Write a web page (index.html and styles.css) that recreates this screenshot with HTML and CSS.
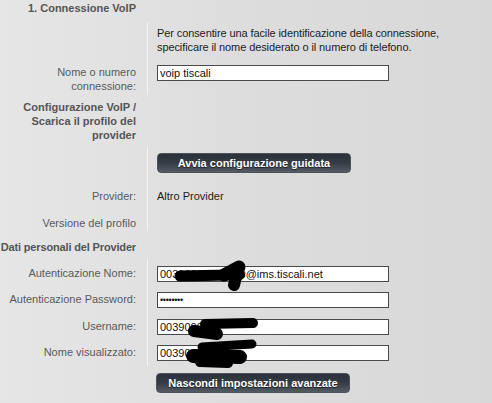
FILE: index.html
```html
<!DOCTYPE html>
<html lang="it">
<head>
<meta charset="utf-8">
<title>Connessione VoIP</title>
<link rel="stylesheet" href="styles.css">
</head>
<body>
<div class="page">
  <div class="row head h1">
    <div class="label bold">1. Connessione VoIP</div>
    <div class="value"></div>
  </div>

  <div class="section s1">
    <div class="row desc">
      <div class="label"></div>
      <div class="value">Per consentire una facile identificazione della connessione,<br>specificare il nome desiderato o il numero di telefono.</div>
    </div>
    <div class="row field name-row">
      <div class="label">Nome o numero<br>connessione:</div>
      <div class="value"><input class="text" type="text" value="voip tiscali"></div>
    </div>
  </div>

  <div class="row head h2">
    <div class="label bold">Configurazione VoIP /<br>Scarica il profilo del<br>provider</div>
    <div class="value"></div>
  </div>

  <div class="section s2">
    <div class="row btn-row">
      <div class="label"></div>
      <div class="value"><button class="btn" type="button">Avvia configurazione guidata</button></div>
    </div>
    <div class="row provider">
      <div class="label">Provider:</div>
      <div class="value dark">Altro Provider</div>
    </div>
    <div class="row version">
      <div class="label">Versione del profilo</div>
      <div class="value"></div>
    </div>
  </div>

  <div class="row head h3">
    <div class="label bold tight">Dati personali del Provider</div>
    <div class="value"></div>
  </div>

  <div class="section s3">
    <div class="row field cred">
      <div class="label">Autenticazione Nome:</div>
      <div class="value"><input class="text" type="text" value="00390000000000@ims.tiscali.net"></div>
    </div>
    <div class="row field cred">
      <div class="label">Autenticazione Password:</div>
      <div class="value"><input class="text pw" type="password" value="12345678"></div>
    </div>
    <div class="row field cred">
      <div class="label">Username:</div>
      <div class="value"><input class="text" type="text" value="0039000000"></div>
    </div>
    <div class="row field cred">
      <div class="label">Nome visualizzato:</div>
      <div class="value"><input class="text" type="text" value="0039000000"></div>
    </div>
  </div>

  <div class="row last">
    <div class="label"></div>
    <div class="value"><button class="btn" type="button">Nascondi impostazioni avanzate</button></div>
  </div>

  <svg class="redact" width="492" height="403" viewBox="0 0 492 403" aria-hidden="true">
    <g stroke="#000" stroke-linecap="round" stroke-linejoin="round" fill="none">
      <path d="M180 276 L230 275" stroke-width="11"/>
      <path d="M224 275 L239 267" stroke-width="13"/>
      <path d="M238 269 L234 285" stroke-width="12"/>
      <path d="M232 276 L240 275" stroke-width="10"/>
      <path d="M205 324 L253 323" stroke-width="10"/>
      <path d="M194 331 L217 334" stroke-width="12"/>
      <path d="M202 347 L252 344" stroke-width="9"/>
      <path d="M193 356 L240 357" stroke-width="14"/>
      <path d="M200 362 L228 363" stroke-width="10"/>
    </g>
  </svg>
</div>
</body>
</html>
```

FILE: styles.css
```css
* { box-sizing: border-box; }

html, body {
  margin: 0;
  padding: 0;
}

body {
  width: 492px;
  height: 403px;
  overflow: hidden;
  background: linear-gradient(to right, #e6e6e6 0%, #dddddd 50%, #d8d8d8 100%);
  font-family: "Liberation Sans", Arial, sans-serif;
  font-size: 11px;
  line-height: 14px;
  color: #555;
}

.page {
  position: relative;
  width: 492px;
  height: 403px;
}

.row {
  display: grid;
  grid-template-columns: 147px 1fr;
}

.label {
  display: flex;
  flex-direction: column;
  align-items: flex-end;
  text-align: right;
  white-space: nowrap;
  padding-right: 11px;
  color: #5a5a5a;
}

.label.bold {
  font-weight: bold;
  color: #555;
}

.label.tight {
  letter-spacing: -0.15px;
}

.value {
  padding-left: 9px;
  color: #1c1c1c;
}

.section .value {
  border-left: 1px solid #f4f4f4;
}

/* heading rows */
.h1 { height: 22px; padding-top: 1px; }
.h2 { height: 52px; padding-top: 5px; }
.h3 { height: 28px; padding-top: 9px; }

/* section 1 */
.desc .value { padding-top: 4px; padding-bottom: 11px; letter-spacing: -0.1px; }
.name-row .label,
.name-row .value { padding-bottom: 2px; }

/* section 2 */
.btn-row .value { padding-top: 6px; height: 36px; }
.provider .value,
.provider .label { padding-top: 6px; height: 27px; }
.version .label,
.version .value { padding-top: 6px; height: 21px; }

/* section 3 */
.cred .label,
.cred .value { padding-top: 7px; height: 26px; }
.cred:nth-child(2) .label,
.cred:nth-child(2) .value { height: 27px; }
.cred:last-child .label,
.cred:last-child .value { height: 28px; }

.text {
  display: block;
  width: 232px;
  height: 16px;
  margin: 0;
  padding: 0 2px;
  border: 1px solid #4a4a4a;
  border-radius: 0;
  background: #fff;
  font-family: "Liberation Sans", Arial, sans-serif;
  font-size: 11px;
  line-height: 14px;
  color: #111;
  outline: none;
}

.text.pw {
  font-size: 9px;
  letter-spacing: -0.3px;
}

.btn {
  display: block;
  width: 194px;
  height: 20px;
  margin: 0;
  padding: 0;
  border: 1px solid #4d535b;
  border-radius: 4px;
  background: linear-gradient(to bottom, #2b3139 0%, #363c45 50%, #555b63 100%);
  color: #fff;
  font-family: "Liberation Sans", Arial, sans-serif;
  font-size: 11px;
  font-weight: bold;
  line-height: 18px;
  text-align: center;
  text-shadow: 0 1px 1px rgba(0, 0, 0, 0.6);
}

.last .value { padding-top: 7px; }

.redact {
  position: absolute;
  left: 0;
  top: 0;
  pointer-events: none;
}
```
